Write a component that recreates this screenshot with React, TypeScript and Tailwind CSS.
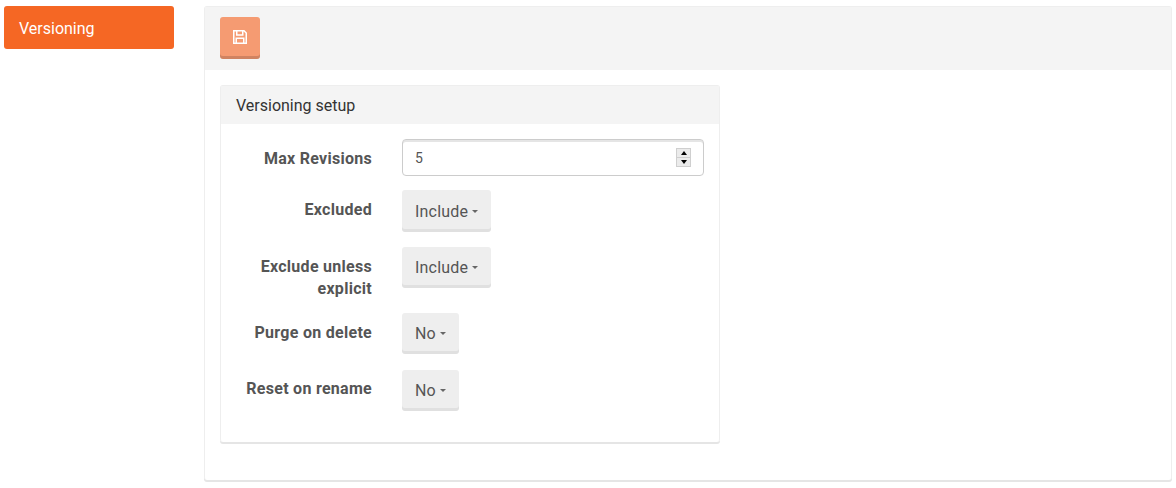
function Caret() {
  return <span className="ml-[4px] inline-block h-0 w-0 border-x-[3px] border-t-[3px] border-x-transparent border-t-[#666] align-middle" />;
}

function FloppyIcon() {
  return (
    <svg width="16" height="16" viewBox="0 0 16 16" fill="none" stroke="currentColor" strokeWidth="1.5">
      <path d="M1.75 1.75H12L14.25 4V14.25H1.75Z" />
      <path d="M4.75 2V6H10.75V2" />
      <path d="M4.25 14V9.25H11.75V14" />
    </svg>
  );
}

function DropButton({ label, tall }: { label: string; tall?: boolean }) {
  return (
    <button
      type="button"
      className={`flex items-center rounded-[3px] bg-[#eeeeee] px-[13px] text-[16px] tracking-[0.2px] text-[#555] shadow-[inset_0_-3px_0_rgba(0,0,0,0.06)] ${
        tall ? 'mb-px h-[42px] pt-px' : 'mb-[2px] h-[41px]'
      }`}
    >
      {label}
      <Caret />
    </button>
  );
}

function Spinner() {
  return (
    <div className="absolute top-[9px] right-[13px] flex h-[19px] w-[15px] flex-col gap-px bg-[#cfcfcf] p-px">
      <div className="flex flex-1 items-center justify-center bg-[#ebebeb]">
        <span className="h-0 w-0 border-x-[3.5px] border-b-[4px] border-x-transparent border-b-black" />
      </div>
      <div className="flex flex-1 items-center justify-center bg-[#ebebeb]">
        <span className="h-0 w-0 border-x-[3.5px] border-t-[4px] border-x-transparent border-t-black" />
      </div>
    </div>
  );
}

function FormRow({ label, last, children }: { label: string; last?: boolean; children: React.ReactNode }) {
  return (
    <div className="flex items-start">
      <label
        className={`-mb-px w-[151px] shrink-0 text-right text-[16px] leading-[22px] font-bold tracking-[0.28px] text-[#555] ${
          last ? 'pt-[8px]' : 'pt-[9px]'
        }`}
      >
        {label}
      </label>
      <div className="ml-[30px] flex-1">{children}</div>
    </div>
  );
}

export default function App() {
  return (
    <div className="flex min-h-[488px] items-start bg-white pt-[6px] pl-[4px] font-['Roboto',sans-serif]">
      <nav className="w-[170px] shrink-0">
        <a className="block h-[43px] rounded-[3px] bg-[#f56724] pt-px pl-[15px] text-[16px] leading-[43px] text-white">Versioning</a>
      </nav>

      <main className="mr-[4px] ml-[30px] h-[474px] flex-1 rounded-[3px] border-x border-t border-[#eeeeee] bg-white shadow-[0_2px_0_#e5e5e5]">
        <div className="flex h-[63px] items-start bg-[#f4f4f4] pt-[10px] pl-[15px]">
          <button
            type="button"
            className="flex h-[42px] w-[40px] items-center justify-center rounded-[3px] bg-[#f59b72] pb-[3px] text-white shadow-[inset_0_-3px_0_rgba(0,0,0,0.15)]"
          >
            <FloppyIcon />
          </button>
        </div>

        <section className="mt-[15px] ml-[15px] h-[357px] w-[500px] rounded-[3px] border-x border-t border-[#eeeeee] shadow-[0_2px_0_#e5e5e5]">
          <h3 className="h-[38px] bg-[#f4f4f4] pl-[15px] text-[16px] leading-[40px] font-normal text-[#333]">Versioning setup</h3>
          <div className="flex flex-col gap-[14px] pt-[15px]">
            <FormRow label="Max Revisions">
              <div className="relative w-[302px]">
                <input
                  type="number"
                  defaultValue={5}
                  className="block h-[37px] w-full appearance-none rounded-[4px] border border-[#cccccc] bg-white px-[12px] text-[14px] text-[#555] shadow-[inset_0_2px_0_#e5e5e5] outline-none [&::-webkit-inner-spin-button]:appearance-none"
                />
                <Spinner />
              </div>
            </FormRow>
            <FormRow label="Excluded">
              <div className="inline-block"><DropButton label="Include" tall /></div>
            </FormRow>
            <FormRow label="Exclude unless explicit">
              <div className="inline-block"><DropButton label="Include" /></div>
            </FormRow>
            <FormRow label="Purge on delete">
              <div className="inline-block"><DropButton label="No" /></div>
            </FormRow>
            <FormRow label="Reset on rename" last>
              <div className="inline-block"><DropButton label="No" /></div>
            </FormRow>
          </div>
        </section>
      </main>
    </div>
  );
}
